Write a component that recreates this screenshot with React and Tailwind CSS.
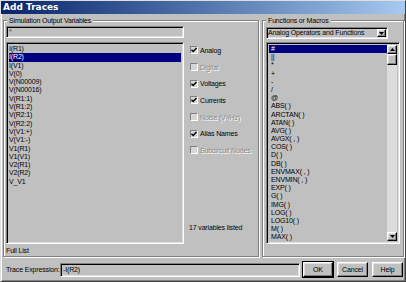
import React from 'react';

const FONT = "font-['Liberation_Sans',Arial,sans-serif] tracking-[-0.15px]";
const SUNKEN = 'border border-t-[#808080] border-l-[#808080] border-b-white border-r-white shadow-[inset_1px_1px_0_#000,inset_-1px_-1px_0_#dfdfdf]';
const RAISED = 'border border-t-white border-l-white border-b-black border-r-black shadow-[inset_-1px_-1px_0_#808080,inset_1px_1px_0_#dfdfdf]';

const variables = [
  'I(R1)', 'I(R2)', 'I(V1)', 'V(0)', 'V(N00009)', 'V(N00016)', 'V(R1:1)', 'V(R1:2)', 'V(R2:1)',
  'V(R2:2)', 'V(V1:+)', 'V(V1:-)', 'V1(R1)', 'V1(V1)', 'V2(R1)', 'V2(R2)', 'V_V1',
];

const functions = [
  '#', '||', '*', '+', '-', '/', '@', 'ABS( )', 'ARCTAN( )', 'ATAN( )', 'AVG( )', 'AVGX( , )',
  'COS( )', 'D( )', 'DB( )', 'ENVMAX( , )', 'ENVMIN( , )', 'EXP( )', 'G( )', 'IMG( )', 'LOG( )',
  'LOG10( )', 'M( )', 'MAX( )',
];

const options = [
  { label: 'Analog', checked: true },
  { label: 'Digital', disabled: true },
  { label: 'Voltages', checked: true },
  { label: 'Currents', checked: true },
  { label: 'Noise (V²/Hz)', disabled: true },
  { label: 'Alias Names', checked: true },
  { label: 'Subcircuit Nodes', disabled: true },
];

const Arrow = ({ up }) => (
  <svg width="5" height="3" viewBox="0 0 5 3">
    <path d={up ? 'M2.5 0 L5 3 L0 3 Z' : 'M0 0 L5 0 L2.5 3 Z'} fill="#000" />
  </svg>
);

const Checkbox = ({ label, checked, disabled }) => (
  <div className="h-[16.7px] flex items-center gap-[2px] whitespace-nowrap">
    <div className="w-[8px] h-[8px] border border-t-[#808080] border-l-[#808080] border-b-white border-r-white bg-[#d6d6d6] flex items-center justify-center">
      {checked && (
        <svg width="6" height="6" viewBox="0 0 6 6">
          <path d="M0.5 2.8 L2.2 4.5 L5.5 1" stroke="#000" strokeWidth="1.4" fill="none" />
        </svg>
      )}
    </div>
    <span className={disabled ? 'text-[#8a8a8a] [text-shadow:1px_1px_0_#fff]' : ''}>{label}</span>
  </div>
);

const GroupBox = ({ title, className, children }) => (
  <fieldset className={`border border-[#808080] shadow-[inset_1px_1px_0_#fff,1px_1px_0_#fff] ${className}`}>
    <legend className="ml-[3px] px-[2px] leading-[9px] bg-[#c0c0c0] whitespace-nowrap">{title}</legend>
    {children}
  </fieldset>
);

export default function App() {
  return (
    <div className={`w-[406px] h-[282px] bg-[#c0c0c0] border border-t-[#dfdfdf] border-l-[#dfdfdf] border-r-[#404040] border-b-[#404040] shadow-[inset_1px_1px_0_#fff,inset_-1px_-1px_0_#808080] flex flex-col text-[7px] leading-[9px] text-black whitespace-nowrap ${FONT}`}>
      <div className="h-[13px] shrink-0 bg-linear-to-r from-[#0a246a] to-[#a6caf0] flex items-center pl-[2px] font-['DejaVu_Sans',sans-serif] font-bold text-[9px] tracking-normal text-white">
        Add Traces
      </div>

      <div className="flex gap-[3px] pl-[2px] mt-[2px]">
        <GroupBox title="Simulation Output Variables" className="w-[256px] h-[241px]">
          <div className="flex pl-[2px]">
            <div className="w-[178px] flex flex-col">
              <div className={`${SUNKEN} mt-[1px] h-[12px] px-[2px] leading-[10px] text-[#555]`}>*</div>
              <div className={`${SUNKEN} mt-[4px] h-[202px] p-[2px] leading-[8.3px]`}>
                {variables.map((v, i) => (
                  <div key={v} className={`h-[8.3px] ${i === 1 ? 'bg-[#000080] text-white' : ''}`}>{v}</div>
                ))}
              </div>
              <div className="mt-[2px] h-[9px]">Full List</div>
            </div>
            <div className="ml-[6px] flex flex-col pt-[17px]">
              {options.map((o) => (
                <Checkbox key={o.label} {...o} />
              ))}
              <div className="mt-[64px] -ml-[1px]">17 variables listed</div>
            </div>
          </div>
        </GroupBox>

        <GroupBox title="Functions or Macros" className="w-[142px] h-[241px]">
          <div className="pl-[3px] flex flex-col">
            <div className={`${SUNKEN} mt-[2px] w-[122px] h-[12px] flex items-center pl-[1px] pr-[1px]`}>
              <span className="flex-1 leading-[10px] overflow-hidden">Analog Operators and Functions</span>
              <div className={`${RAISED} w-[9px] h-[8px] flex items-center justify-center`}>
                <Arrow />
              </div>
            </div>
            <div className={`${SUNKEN} mt-[3px] w-[134px] h-[202px] p-[2px] flex`}>
              <div className="flex-1 leading-[8.2px] overflow-hidden">
                {functions.map((f, i) => (
                  <div key={f} className={`h-[8.2px] pl-[2px] ${i === 0 ? 'bg-[#000080] text-white' : ''}`}>{f}</div>
                ))}
              </div>
              <div className="w-[10px] flex flex-col bg-[#dcdcdc]">
                <div className={`${RAISED} h-[9px] bg-[#c0c0c0] flex items-center justify-center`}>
                  <Arrow up />
                </div>
                <div className={`${RAISED} h-[11px] bg-[#c0c0c0]`} />
                <div className="flex-1" />
                <div className={`${RAISED} h-[9px] bg-[#c0c0c0] flex items-center justify-center`}>
                  <Arrow />
                </div>
              </div>
            </div>
          </div>
        </GroupBox>
      </div>

      <div className="flex items-center mt-[5px] pl-[5px]">
        <div className="w-[54px]">Trace Expression:</div>
        <div className={`${SUNKEN} w-[240px] h-[14px] px-[2px] flex items-center`}>-I(R2)</div>
        <div className={`${RAISED} outline outline-1 outline-black ml-[3px] w-[30px] h-[15px] flex items-center justify-center`}>OK</div>
        <div className={`${RAISED} ml-[4px] w-[31px] h-[15px] flex items-center justify-center`}>Cancel</div>
        <div className={`${RAISED} ml-[4px] w-[31px] h-[15px] flex items-center justify-center`}>Help</div>
      </div>
    </div>
  );
}
